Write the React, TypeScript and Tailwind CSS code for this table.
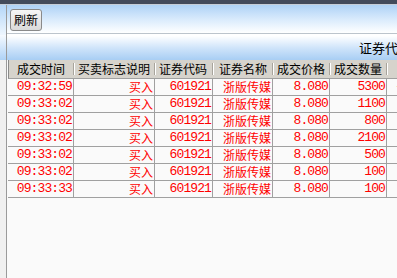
import React from "react";

const rows = [
    { time: "09:32:59", qty: "5300" },
    { time: "09:33:02", qty: "1100" },
    { time: "09:33:02", qty: "800" },
    { time: "09:33:02", qty: "2100" },
    { time: "09:33:02", qty: "500" },
    { time: "09:33:02", qty: "100" },
    { time: "09:33:33", qty: "100" },
];

const cols = [
    { title: "成交时间", w: "w-[66px]", pl: "pl-[8px]" },
    { title: "买卖标志说明", w: "w-[81px]", pl: "pl-[3px]" },
    { title: "证券代码", w: "w-[58px]", pl: "pl-[3px]" },
    { title: "证券名称", w: "w-[60px]", pl: "pl-[5px]" },
    { title: "成交价格", w: "w-[57px]", pl: "pl-[3px]" },
    { title: "成交数量", w: "w-[57px]", pl: "pl-[3px]" },
];

function Cell({ w, children }: { w: string; children?: React.ReactNode }) {
    return (
        <div className={`${w} shrink-0 h-full border-r border-[#a0a0a0] flex items-center justify-end pr-[1px] overflow-hidden whitespace-nowrap`}>
            {children}
        </div>
    );
}

export default function App() {
    return (
        <div className="w-[397px] h-[278px] overflow-hidden bg-[#fafafa] flex flex-col font-['Noto_Sans_CJK_SC',sans-serif] text-[12px]">
            <div className="h-[4px] bg-[#434b5b] shrink-0" />
            <div className="h-[1px] bg-[#c6ced8] shrink-0" />
            <div className="flex flex-1 min-h-0">
                {/* left strip */}
                <div className="w-[6px] shrink-0 flex flex-col">
                    <div className="h-[30px] bg-gradient-to-b from-[#b4d6f8] to-[#eef6fe]" />
                    <div className="h-[25px] bg-gradient-to-b from-[#f6faff] to-[#aed2f6]" />
                    <div className="flex-1 bg-[#f0f0f0]" />
                </div>
                <div className="w-[1px] shrink-0 bg-[#9a9a9a]" />
                <div className="flex-1 min-w-0 flex flex-col">
                    {/* toolbar */}
                    <div className="h-[29px] shrink-0 bg-gradient-to-b from-[#aed2f6] via-[#d8eafc] to-[#ffffff] border-b border-[#bcc4cc] pl-[3px] pt-[4px]">
                        <button className="w-[32px] h-[22px] rounded-[3px] border border-[#8a8a8a] bg-gradient-to-b from-[#f6f6f6] to-[#dadada] text-[12px] leading-none text-black flex items-center justify-center">
                            刷新
                        </button>
                    </div>
                    <div className="h-[2px] shrink-0 bg-white" />
                    {/* title panel */}
                    <div className="h-[24px] shrink-0 bg-gradient-to-b from-[#ffffff] via-[#cfe4fa] to-[#a8cef4] flex items-center justify-start pl-[352px] whitespace-nowrap overflow-hidden">
                        <span className="text-[13px] text-black">证券代码</span>
                    </div>
                    {/* table */}
                    <div className="flex-1 pl-[1px] flex flex-col">
                        <div className="h-[19px] shrink-0 flex bg-[#d6d3cc] border-l border-[#8a8a8a] border-b border-b-[#a0a0a0]">
                            {cols.map((c) => (
                                <div key={c.title} className={`${c.w} shrink-0 h-full flex items-center justify-between ${c.pl} text-black whitespace-nowrap`}>
                                    <span>{c.title}</span>
                                    <span className="w-[2px] h-[12px] flex shrink-0">
                                        <span className="w-[1px] h-full bg-[#a8a49c]" />
                                        <span className="w-[1px] h-full bg-white" />
                                    </span>
                                </div>
                            ))}
                            <div className="flex-1" />
                        </div>
                        {rows.map((r, i) => (
                            <div key={i} className="h-[17px] shrink-0 flex border-b border-[#a0a0a0] text-[#ff0000] text-[13px] font-['Liberation_Mono','Noto_Sans_CJK_SC',monospace] tracking-[-0.9px]">
                                <Cell w="w-[66px]">{r.time}</Cell>
                                <Cell w="w-[81px]"><span className="text-[12px] font-['Noto_Sans_CJK_SC',sans-serif] tracking-normal">买入</span></Cell>
                                <Cell w="w-[58px]">601921</Cell>
                                <Cell w="w-[60px]"><span className="text-[12px] font-['Noto_Sans_CJK_SC',sans-serif] tracking-normal">浙版传媒</span></Cell>
                                <Cell w="w-[57px]">8.080</Cell>
                                <Cell w="w-[57px]">{r.qty}</Cell>
                                <div className="flex-1 h-full flex items-center pl-[8px] overflow-hidden">
                                    {i === 0 ? "-" : ""}
                                </div>
                            </div>
                        ))}
                    </div>
                </div>
            </div>
        </div>
    );
}
